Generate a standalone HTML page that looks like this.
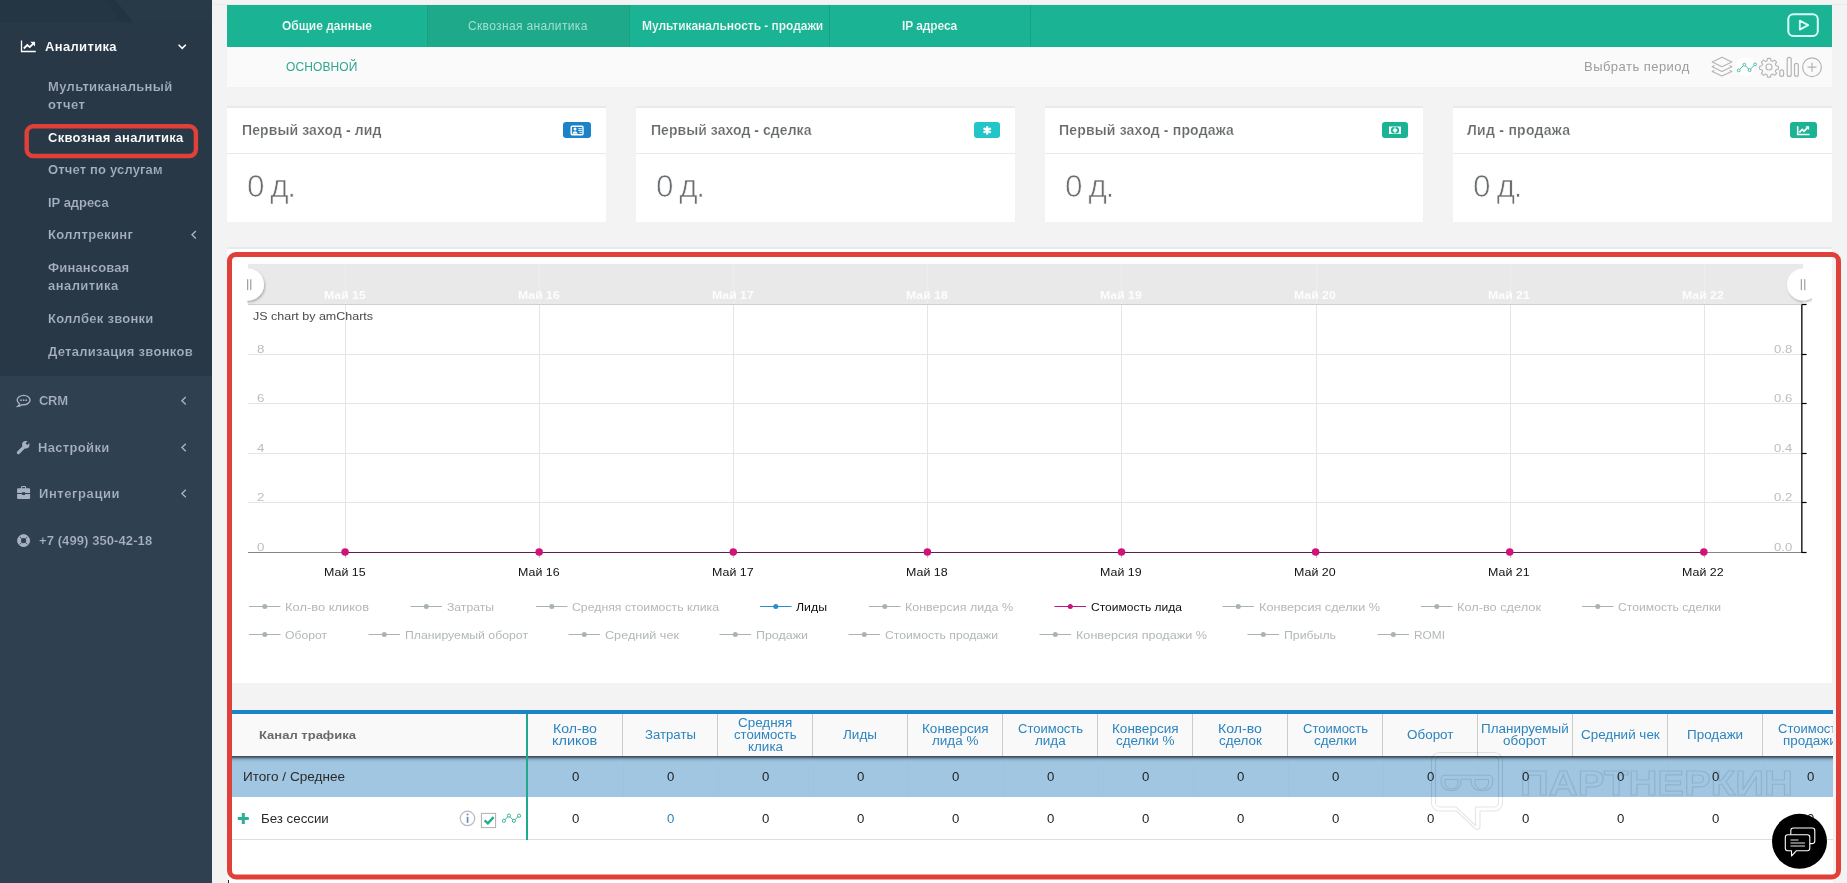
<!DOCTYPE html>
<html lang="ru">
<head>
<meta charset="utf-8">
<title>Сквозная аналитика</title>
<style>
*{box-sizing:border-box;margin:0;padding:0}
html,body{width:1847px;height:883px;overflow:hidden}
body{position:relative;background:#f3f3f4;font-family:"Liberation Sans",sans-serif;font-size:13px;color:#676a6c}
.t{position:absolute;white-space:nowrap;display:block;will-change:transform}
.abs{position:absolute}
svg{position:absolute;overflow:visible}
#side{position:absolute;left:0;top:0;width:212px;height:883px;background:#2f4050}
#side .act{position:absolute;left:0;top:0;width:212px;height:376px;background:#293846}
#side .hdr{position:absolute;left:0;top:0;width:212px;height:22px;background:linear-gradient(115deg,#263441 0,#263441 52%,#293745 52.5%,#2a3947 100%)}
#tabs{position:absolute;left:227px;top:5px;width:1605px;height:41.5px;background:#1ab394}
#tabs .sep{position:absolute;top:0;width:1px;height:41.5px;background:#18a085}
#tabs .on{position:absolute;left:200px;top:0;width:202px;height:41.5px;background:#1fa98b}
#sub{position:absolute;left:227px;top:46.5px;width:1605px;height:40.5px;background:#fafafa}
.card{position:absolute;top:105.5px;height:116.5px;background:#fff;border-top:2px solid #e7eaec}
.card .hr{position:absolute;left:0;right:0;top:45px;height:1px;background:#e7eaec}
.badge{position:absolute;top:122px;height:16px;border-radius:3px}
#panel{position:absolute;left:227px;top:246.5px;width:1605px;height:436.5px;background:#fff;border-top:2px solid #e7eaec}
#tbl{position:absolute;left:228px;top:710px;width:1605px;height:173px;background:#fff;overflow:hidden}
</style>
</head>
<body>
<nav id="side"><div class="act"></div>
<span class="t" style="left:45.3px;top:37.9px;font-size:13px;line-height:17px;font-weight:700;color:#ffffff;letter-spacing:0.343px;-webkit-text-stroke:.08px #293846;">Аналитика</span>
<span class="t" style="left:47.9px;top:77.9px;font-size:13px;line-height:17px;font-weight:700;color:#a7b1c2;letter-spacing:0.349px;-webkit-text-stroke:.17px #293846;">Мультиканальный</span>
<span class="t" style="left:47.9px;top:95.7px;font-size:13px;line-height:17px;font-weight:700;color:#a7b1c2;letter-spacing:0.448px;-webkit-text-stroke:.17px #293846;">отчет</span>
<span class="t" style="left:47.8px;top:129.1px;font-size:13px;line-height:17px;font-weight:700;color:#ffffff;letter-spacing:0.262px;-webkit-text-stroke:.08px #293846;">Сквозная аналитика</span>
<span class="t" style="left:47.8px;top:161.3px;font-size:13px;line-height:17px;font-weight:700;color:#a7b1c2;letter-spacing:0.163px;-webkit-text-stroke:.17px #293846;">Отчет по услугам</span>
<span class="t" style="left:47.8px;top:193.9px;font-size:13px;line-height:17px;font-weight:700;color:#a7b1c2;letter-spacing:-0.007px;-webkit-text-stroke:.17px #293846;">IP адреса</span>
<span class="t" style="left:47.8px;top:225.8px;font-size:13px;line-height:17px;font-weight:700;color:#a7b1c2;letter-spacing:0.348px;-webkit-text-stroke:.17px #293846;">Коллтрекинг</span>
<span class="t" style="left:47.8px;top:258.8px;font-size:13px;line-height:17px;font-weight:700;color:#a7b1c2;letter-spacing:0.147px;-webkit-text-stroke:.17px #293846;">Финансовая</span>
<span class="t" style="left:47.8px;top:277.1px;font-size:13px;line-height:17px;font-weight:700;color:#a7b1c2;letter-spacing:0.449px;-webkit-text-stroke:.17px #293846;">аналитика</span>
<span class="t" style="left:47.8px;top:309.7px;font-size:13px;line-height:17px;font-weight:700;color:#a7b1c2;letter-spacing:0.268px;-webkit-text-stroke:.17px #293846;">Коллбек звонки</span>
<span class="t" style="left:47.8px;top:342.5px;font-size:13px;line-height:17px;font-weight:700;color:#a7b1c2;letter-spacing:0.296px;-webkit-text-stroke:.17px #293846;">Детализация звонков</span>
<span class="t" style="left:39.1px;top:392.0px;font-size:13px;line-height:17px;font-weight:700;color:#a7b1c2;letter-spacing:-0.269px;-webkit-text-stroke:.17px #2f4050;">CRM</span>
<span class="t" style="left:38.3px;top:438.8px;font-size:13px;line-height:17px;font-weight:700;color:#a7b1c2;letter-spacing:0.335px;-webkit-text-stroke:.17px #2f4050;">Настройки</span>
<span class="t" style="left:39.1px;top:484.8px;font-size:13px;line-height:17px;font-weight:700;color:#a7b1c2;letter-spacing:0.574px;-webkit-text-stroke:.17px #2f4050;">Интеграции</span>
<span class="t" style="left:39.1px;top:532.0px;font-size:13px;line-height:17px;font-weight:700;color:#a7b1c2;letter-spacing:0.085px;-webkit-text-stroke:.17px #2f4050;">+7 (499) 350-42-18</span>
<svg width="212" height="883" viewBox="0 0 212 883" style="left:0;top:0">
<rect x="0" y="0" width="212" height="22.500" fill="#243644"/><path d="M115 0h97v22.500h-79z" fill="#283a48"/><path d="M105 0h10l18 22.500h-11z" fill="#223342"/>
<!-- line chart icon -->
<g fill="none" stroke="#fff" stroke-width="1.6"><path d="M21.5 40.6V51.5H35.8" stroke-width="1.3"/><path d="M23.8 48.5l3.5-3.5 2.5 2.1 4.2-4.2" stroke-width="1.8"/><path d="M31.6 42.3h2.9v2.9z" stroke-width="1.1" fill="#fff"/></g>
<!-- chevron down -->
<path d="M178.6 44.8l3.6 3.6 3.6-3.6" fill="none" stroke="#fff" stroke-width="1.6"/>
<!-- chevrons left -->
<g fill="none" stroke="#a7b1c2" stroke-width="1.4">
<path d="M195.9 231l-3.9 3.8 3.9 3.8"/>
<path d="M185.8 397l-3.9 3.8 3.9 3.8"/>
<path d="M185.8 443.7l-3.9 3.8 3.9 3.8"/>
<path d="M185.8 489.7l-3.9 3.8 3.9 3.8"/>
</g>
<!-- CRM comment icon -->
<g><path d="M23.6 395.4c-3.6 0-6.4 2.1-6.4 4.7 0 1.5 0.9 2.8 2.4 3.7-.2 0.9-.8 1.8-1.7 2.5 1.6-.1 3-.7 4-1.6.5.1 1.1.1 1.7.1 3.6 0 6.4-2.1 6.4-4.7s-2.800-4.700-6.400-4.700z" fill="none" stroke="#a7b1c2" stroke-width="1.4"/>
<circle cx="21" cy="400.200" r=".9" fill="#a7b1c2"/><circle cx="23.600" cy="400.200" r=".9" fill="#a7b1c2"/><circle cx="26.200" cy="400.200" r=".9" fill="#a7b1c2"/></g>
<!-- wrench -->
<g><path d="M18.400 452.600l6.300-6.300" stroke="#a7b1c2" stroke-width="3.200" stroke-linecap="round" fill="none"/><circle cx="25.800" cy="444.800" r="3.700" fill="#a7b1c2"/><path d="M26.400 444.200l3.600-3.600" stroke="#2f4050" stroke-width="2.600" fill="none"/></g>
<!-- briefcase -->
<g fill="#a7b1c2"><path d="M21.100 488.300v-1.400c0-.5.400-.9.900-.9h3.200c.5 0 .9.400.9.900v1.400h2.900c.6 0 1.100.5 1.100 1.100v3.600h-5v-.8h-3v.8h-5v-3.600c0-.6.500-1.100 1.100-1.100zm1.100 0h2.800v-1.200h-2.800zM17.100 494.100h5v.9h3v-.9h5v3.800c0 .6-.5 1.100-1.100 1.100h-10.800c-.6 0-1.100-.5-1.100-1.100z"/></g>
<!-- life ring -->
<g fill="none"><circle cx="23.600" cy="540.600" r="4.400" stroke="#a7b1c2" stroke-width="3.600"/><path d="M21.700 538.700l-2.200-2.200M25.500 538.700l2.200-2.200M21.700 542.500l-2.200 2.200M25.500 542.500l2.200 2.200" stroke="#2f4050" stroke-width=".9"/><circle cx="23.600" cy="540.600" r="5.900" stroke="#a7b1c2" stroke-width="1"/></g>
<!-- red annotation -->
<rect x="26.700" y="126.300" width="169.200" height="29.700" rx="6.500" fill="none" stroke="#e0403a" stroke-width="4.400"/>
</svg>
</nav>
<div class="abs" style="left:213px;top:4px;width:1634px;height:1px;background:#eaeaeb"></div>
<header id="tabs"><div class="on"></div><div class="sep" style="left:200px"></div><div class="sep" style="left:402px"></div><div class="sep" style="left:602px"></div><div class="sep" style="left:803px"></div></header>
<span class="t" style="left:282.2px;top:18.0px;font-size:12px;line-height:16px;font-weight:700;color:#fff;letter-spacing:-0.006px;-webkit-text-stroke:.2px #1ab394;">Общие данные</span>
<span class="t" style="left:468.2px;top:18.0px;font-size:12px;line-height:16px;font-weight:400;color:#a3dfd1;letter-spacing:0.350px;">Сквозная аналитика</span>
<span class="t" style="left:641.7px;top:18.0px;font-size:12px;line-height:16px;font-weight:700;color:#fff;letter-spacing:-0.039px;-webkit-text-stroke:.2px #1ab394;">Мультиканальность - продажи</span>
<span class="t" style="left:902.3px;top:18.0px;font-size:12px;line-height:16px;font-weight:700;color:#fff;letter-spacing:-0.099px;-webkit-text-stroke:.2px #1ab394;">IP адреса</span>
<svg width="40" height="30" viewBox="0 0 40 30" style="left:1783px;top:10px">
<rect x="5.300" y="4.300" width="29.500" height="21.600" rx="5" fill="none" stroke="#d6fff8" stroke-width="2"/>
<path d="M16.800 10.600v9l8.400-4.500z" fill="none" stroke="#d6fff8" stroke-width="1.800" stroke-linejoin="round"/>
</svg>
<div id="sub"></div>
<span class="t" style="left:286.3px;top:59.3px;font-size:12px;line-height:16px;font-weight:400;color:#2fa790;letter-spacing:0.109px;">ОСНОВНОЙ</span>
<span class="t" style="left:1584.2px;top:57.7px;font-size:13px;line-height:17px;font-weight:400;color:#9b9c9d;letter-spacing:0.467px;">Выбрать период</span>
<svg width="130" height="30" viewBox="1705 52 130 30" style="left:1705px;top:52px">
<g fill="none" stroke="#b4b4b4" stroke-width="1.150" stroke-linejoin="round">
<path d="M1722 57.300l9.800 4.700-9.800 4.700-9.800-4.700z"/><path d="M1714.400 65.600l-2.200 1.100 9.800 4.700 9.800-4.700-2.200-1.100"/><path d="M1714.400 70.300l-2.200 1.100 9.800 4.700 9.800-4.700-2.200-1.100"/>
</g>
<circle cx="1745.500" cy="66.500" r="9.800" fill="#fff"/>
<g fill="none" stroke="#3fb89e" stroke-width=".95"><path d="M1739.700 69.400l3.600-3.600M1745.500 65.800l3.100 3.200M1750.600 69l3.500-3.500"/><circle cx="1738.700" cy="70.400" r="1.400"/><circle cx="1744.400" cy="64.700" r="1.400"/><circle cx="1749.600" cy="70.100" r="1.400"/><circle cx="1755.100" cy="64.400" r="1.400"/></g>
<g fill="none" stroke="#b4b4b4" stroke-width="1.200">
<g transform="translate(1769 67) scale(.92) translate(-1769 -67)"><circle cx="1769" cy="67" r="3.300"/>
<path d="M1767.400 57.600h3.200l.5 2.500 1.800.8 2.100-1.400 2.300 2.300-1.400 2.100.8 1.800 2.500.5v3.200l-2.500.5-.8 1.800 1.400 2.100-2.300 2.300-2.100-1.400-1.800.8-.5 2.500h-3.200l-.5-2.500-1.800-.8-2.100 1.400-2.300-2.300 1.400-2.100-.8-1.800-2.500-.5v-3.200l2.500-.5.8-1.800-1.400-2.100 2.300-2.300 2.100 1.400 1.800-.8z" stroke-linejoin="round"/></g>
<rect x="1779.800" y="69.800" width="3.800" height="6.600" rx="1.900"/><rect x="1787.200" y="57.400" width="4" height="19" rx="2"/><rect x="1794.500" y="63.400" width="3.800" height="13" rx="1.900"/>
<circle cx="1812" cy="67.200" r="9.400"/><path d="M1807.500 67.200h9M1812 62.700v9"/>
</g></svg>
<section class="card" style="left:227px;width:379px"><div class="hr"></div></section>
<span class="t" style="left:241.7px;top:121.0px;font-size:14px;line-height:18px;font-weight:700;color:#676a6c;letter-spacing:0.109px;-webkit-text-stroke:.2px #fff;">Первый заход - лид</span>
<span class="t" style="left:247.0px;top:165.8px;font-size:31.5px;line-height:41px;font-weight:400;color:#6b6e70;letter-spacing:-1.451px;-webkit-text-stroke:0.7px #fff;">0 д.</span>
<section class="card" style="left:636px;width:379px"><div class="hr"></div></section>
<span class="t" style="left:650.5px;top:121.0px;font-size:14px;line-height:18px;font-weight:700;color:#676a6c;letter-spacing:0.057px;-webkit-text-stroke:.2px #fff;">Первый заход - сделка</span>
<span class="t" style="left:655.9px;top:165.8px;font-size:31.5px;line-height:41px;font-weight:400;color:#6b6e70;letter-spacing:-1.451px;-webkit-text-stroke:0.7px #fff;">0 д.</span>
<section class="card" style="left:1045px;width:378px"><div class="hr"></div></section>
<span class="t" style="left:1059.1px;top:121.0px;font-size:14px;line-height:18px;font-weight:700;color:#676a6c;letter-spacing:0.173px;-webkit-text-stroke:.2px #fff;">Первый заход - продажа</span>
<span class="t" style="left:1064.9px;top:165.8px;font-size:31.5px;line-height:41px;font-weight:400;color:#6b6e70;letter-spacing:-1.376px;-webkit-text-stroke:0.7px #fff;">0 д.</span>
<section class="card" style="left:1453px;width:379px"><div class="hr"></div></section>
<span class="t" style="left:1467.4px;top:121.0px;font-size:14px;line-height:18px;font-weight:700;color:#676a6c;letter-spacing:0.270px;-webkit-text-stroke:.2px #fff;">Лид - продажа</span>
<span class="t" style="left:1473.2px;top:165.8px;font-size:31.5px;line-height:41px;font-weight:400;color:#6b6e70;letter-spacing:-1.276px;-webkit-text-stroke:0.7px #fff;">0 д.</span>
<div class="badge" style="left:563px;width:28px;background:#1c84c6"></div>
<div class="badge" style="left:974px;width:26px;background:#23c6c8"></div>
<div class="badge" style="left:1382px;width:26px;background:#1ab394"></div>
<div class="badge" style="left:1790px;width:27px;background:#1ab394"></div>
<svg width="1300" height="20" viewBox="560 120 1300 20" style="left:560px;top:120px">
<!-- id card -->
<rect x="571.200" y="126.200" width="11.800" height="8.600" rx="1" fill="none" stroke="#fff" stroke-width="1.400"/>
<circle cx="575" cy="129" r="1.500" fill="#fff"/><path d="M572.500 133.800c0-3.500 5-3.500 5 0z" fill="#fff"/>
<path d="M578.400 128.700h3.400M578.400 130.600h3.400M579.600 132.600h2.200" stroke="#fff" stroke-width="1"/>
<!-- asterisk -->
<g stroke="#fff" stroke-width="2.400" stroke-linecap="round"><path d="M987.200 127.200v6.400M984.400 128.800l5.600 3.200M984.400 132l5.600-3.200"/></g>
<!-- money -->
<rect x="1389" y="126.500" width="12" height="7.500" fill="#fff"/><ellipse cx="1395" cy="130.250" rx="3.300" ry="2.600" fill="#d8fbf4" stroke="#1ab394" stroke-width="1.800"/><rect x="1394.400" y="126.500" width="1.200" height="7.500" fill="#fff" fill-opacity=".85"/>
<!-- line chart -->
<g fill="none" stroke="#fff"><path d="M1797.700 126.200v8.300h11.800" stroke-width="1.600"/><path d="M1799.400 132.400l2.800-2.900 1.800 1.700 3.900-3.800" stroke-width="1.700"/><path d="M1805.800 126.900h2.700v2.700" stroke-width="1.300"/></g>
</svg>
<section id="panel"></section>
<svg width="1847" height="883" viewBox="0 0 1847 883" style="left:0;top:0">
<defs><clipPath id="cc"><rect x="247" y="255" width="1565" height="60"/></clipPath><filter id="sh" x="-30%" y="-30%" width="170%" height="170%"><feDropShadow dx="1" dy="1.5" stdDeviation="1.2" flood-color="#000" flood-opacity=".28"/></filter></defs>
<rect x="248" y="264" width="1555" height="40" fill="#e9e9e9"/>
<rect x="248" y="304" width="1555" height="1" fill="#cfcfcf"/>
<rect x="345" y="264" width="1" height="40" fill="#eeeeee"/>
<rect x="539" y="264" width="1" height="40" fill="#eeeeee"/>
<rect x="733" y="264" width="1" height="40" fill="#eeeeee"/>
<rect x="927" y="264" width="1" height="40" fill="#eeeeee"/>
<rect x="1121" y="264" width="1" height="40" fill="#eeeeee"/>
<rect x="1316" y="264" width="1" height="40" fill="#eeeeee"/>
<rect x="1510" y="264" width="1" height="40" fill="#eeeeee"/>
<rect x="1704" y="264" width="1" height="40" fill="#eeeeee"/>
<rect x="345" y="305" width="1" height="247" fill="#e5e5e5"/>
<rect x="539" y="305" width="1" height="247" fill="#e5e5e5"/>
<rect x="733" y="305" width="1" height="247" fill="#e5e5e5"/>
<rect x="927" y="305" width="1" height="247" fill="#e5e5e5"/>
<rect x="1121" y="305" width="1" height="247" fill="#e5e5e5"/>
<rect x="1316" y="305" width="1" height="247" fill="#e5e5e5"/>
<rect x="1510" y="305" width="1" height="247" fill="#e5e5e5"/>
<rect x="1704" y="305" width="1" height="247" fill="#e5e5e5"/>
<rect x="248" y="502.0" width="1554" height="1" fill="#e5e5e5"/>
<rect x="248" y="453.0" width="1554" height="1" fill="#e5e5e5"/>
<rect x="248" y="403.0" width="1554" height="1" fill="#e5e5e5"/>
<rect x="248" y="354.0" width="1554" height="1" fill="#e5e5e5"/>
<rect x="248" y="552" width="1554" height="1" fill="#858585"/>
<rect x="345" y="553" width="1" height="5" fill="#c4c4c4"/>
<rect x="539" y="553" width="1" height="5" fill="#c4c4c4"/>
<rect x="733" y="553" width="1" height="5" fill="#c4c4c4"/>
<rect x="927" y="553" width="1" height="5" fill="#c4c4c4"/>
<rect x="1121" y="553" width="1" height="5" fill="#c4c4c4"/>
<rect x="1316" y="553" width="1" height="5" fill="#c4c4c4"/>
<rect x="1510" y="553" width="1" height="5" fill="#c4c4c4"/>
<rect x="1704" y="553" width="1" height="5" fill="#c4c4c4"/>
<rect x="345.1" y="552" width="1358.8" height="1" fill="#5c1f4f"/>
<circle cx="345.06" cy="552.1" r="3.75" fill="#d0137a"/>
<circle cx="539.16" cy="552.1" r="3.75" fill="#d0137a"/>
<circle cx="733.28" cy="552.1" r="3.75" fill="#d0137a"/>
<circle cx="927.38" cy="552.1" r="3.75" fill="#d0137a"/>
<circle cx="1121.50" cy="552.1" r="3.75" fill="#d0137a"/>
<circle cx="1315.61" cy="552.1" r="3.75" fill="#d0137a"/>
<circle cx="1509.72" cy="552.1" r="3.75" fill="#d0137a"/>
<circle cx="1703.83" cy="552.1" r="3.75" fill="#d0137a"/>
<rect x="1801.2" y="304.5" width="1.3" height="248.5" fill="#000"/>
<rect x="1802" y="551.9" width="4.6" height="1.2" fill="#000"/>
<rect x="1802" y="501.9" width="4.6" height="1.2" fill="#000"/>
<rect x="1802" y="452.9" width="4.6" height="1.2" fill="#000"/>
<rect x="1802" y="402.9" width="4.6" height="1.2" fill="#000"/>
<rect x="1802" y="353.9" width="4.6" height="1.2" fill="#000"/>
<rect x="1802" y="303.9" width="4.6" height="1.2" fill="#000"/>
<g clip-path="url(#cc)"><circle cx="248" cy="284.5" r="16" fill="#fff" filter="url(#sh)"/><circle cx="1803" cy="284.5" r="16" fill="#fff" filter="url(#sh)"/>
<path d="M247.700 279.200v11M250.800 279.200v11M1801.300 279.200v11M1804.800 279.200v11" stroke="#8a8a8a" stroke-width="1"/></g>
<rect x="249" y="606" width="31.5" height="1" fill="#aab2b2"/><circle cx="264.8" cy="606.4" r="2.500" fill="#aab2b2"/>
<rect x="410.5" y="606" width="31.5" height="1" fill="#aab2b2"/><circle cx="426.3" cy="606.4" r="2.500" fill="#aab2b2"/>
<rect x="536" y="606" width="31.5" height="1" fill="#aab2b2"/><circle cx="551.8" cy="606.4" r="2.500" fill="#aab2b2"/>
<rect x="760" y="606" width="31.5" height="1" fill="#2a8fc9"/><circle cx="775.8" cy="606.4" r="2.500" fill="#2a8fc9"/>
<rect x="869" y="606" width="31.5" height="1" fill="#aab2b2"/><circle cx="884.8" cy="606.4" r="2.500" fill="#aab2b2"/>
<rect x="1054.5" y="606" width="31.5" height="1" fill="#c21580"/><circle cx="1070.3" cy="606.4" r="2.500" fill="#c21580"/>
<rect x="1222.5" y="606" width="31.5" height="1" fill="#aab2b2"/><circle cx="1238.3" cy="606.4" r="2.500" fill="#aab2b2"/>
<rect x="1421" y="606" width="31.5" height="1" fill="#aab2b2"/><circle cx="1436.8" cy="606.4" r="2.500" fill="#aab2b2"/>
<rect x="1582" y="606" width="31.5" height="1" fill="#aab2b2"/><circle cx="1597.8" cy="606.4" r="2.500" fill="#aab2b2"/>
<rect x="249" y="634" width="31.5" height="1" fill="#aab2b2"/><circle cx="264.8" cy="634.5" r="2.500" fill="#aab2b2"/>
<rect x="368.5" y="634" width="31.5" height="1" fill="#aab2b2"/><circle cx="384.3" cy="634.5" r="2.500" fill="#aab2b2"/>
<rect x="568.5" y="634" width="31.5" height="1" fill="#aab2b2"/><circle cx="584.3" cy="634.5" r="2.500" fill="#aab2b2"/>
<rect x="719.5" y="634" width="31.5" height="1" fill="#aab2b2"/><circle cx="735.3" cy="634.5" r="2.500" fill="#aab2b2"/>
<rect x="848.5" y="634" width="31.5" height="1" fill="#aab2b2"/><circle cx="864.3" cy="634.5" r="2.500" fill="#aab2b2"/>
<rect x="1039.5" y="634" width="31.5" height="1" fill="#aab2b2"/><circle cx="1055.3" cy="634.5" r="2.500" fill="#aab2b2"/>
<rect x="1247.5" y="634" width="31.5" height="1" fill="#aab2b2"/><circle cx="1263.3" cy="634.5" r="2.500" fill="#aab2b2"/>
<rect x="1377.5" y="634" width="31.5" height="1" fill="#aab2b2"/><circle cx="1393.3" cy="634.5" r="2.500" fill="#aab2b2"/>
</svg>
<span class="t" style="left:323.6px;top:565.0px;font-size:11px;line-height:14px;font-weight:400;color:#111;transform:scaleX(1.1292);transform-origin:0 50%;">Май 15</span>
<span class="t" style="left:323.6px;top:288.3px;font-size:11px;line-height:14px;font-weight:700;color:#fdfdfd;transform:scaleX(1.1129);transform-origin:0 50%;">Май 15</span>
<span class="t" style="left:517.7px;top:565.0px;font-size:11px;line-height:14px;font-weight:400;color:#111;transform:scaleX(1.1292);transform-origin:0 50%;">Май 16</span>
<span class="t" style="left:517.7px;top:288.3px;font-size:11px;line-height:14px;font-weight:700;color:#fdfdfd;transform:scaleX(1.1129);transform-origin:0 50%;">Май 16</span>
<span class="t" style="left:711.8px;top:565.0px;font-size:11px;line-height:14px;font-weight:400;color:#111;transform:scaleX(1.1292);transform-origin:0 50%;">Май 17</span>
<span class="t" style="left:711.8px;top:288.3px;font-size:11px;line-height:14px;font-weight:700;color:#fdfdfd;transform:scaleX(1.1129);transform-origin:0 50%;">Май 17</span>
<span class="t" style="left:905.9px;top:565.0px;font-size:11px;line-height:14px;font-weight:400;color:#111;transform:scaleX(1.1292);transform-origin:0 50%;">Май 18</span>
<span class="t" style="left:905.9px;top:288.3px;font-size:11px;line-height:14px;font-weight:700;color:#fdfdfd;transform:scaleX(1.1129);transform-origin:0 50%;">Май 18</span>
<span class="t" style="left:1100.0px;top:565.0px;font-size:11px;line-height:14px;font-weight:400;color:#111;transform:scaleX(1.1292);transform-origin:0 50%;">Май 19</span>
<span class="t" style="left:1100.0px;top:288.3px;font-size:11px;line-height:14px;font-weight:700;color:#fdfdfd;transform:scaleX(1.1129);transform-origin:0 50%;">Май 19</span>
<span class="t" style="left:1294.1px;top:565.0px;font-size:11px;line-height:14px;font-weight:400;color:#111;transform:scaleX(1.1292);transform-origin:0 50%;">Май 20</span>
<span class="t" style="left:1294.1px;top:288.3px;font-size:11px;line-height:14px;font-weight:700;color:#fdfdfd;transform:scaleX(1.1129);transform-origin:0 50%;">Май 20</span>
<span class="t" style="left:1488.2px;top:565.0px;font-size:11px;line-height:14px;font-weight:400;color:#111;transform:scaleX(1.1292);transform-origin:0 50%;">Май 21</span>
<span class="t" style="left:1488.2px;top:288.3px;font-size:11px;line-height:14px;font-weight:700;color:#fdfdfd;transform:scaleX(1.1129);transform-origin:0 50%;">Май 21</span>
<span class="t" style="left:1682.3px;top:565.0px;font-size:11px;line-height:14px;font-weight:400;color:#111;transform:scaleX(1.1292);transform-origin:0 50%;">Май 22</span>
<span class="t" style="left:1682.3px;top:288.3px;font-size:11px;line-height:14px;font-weight:700;color:#fdfdfd;transform:scaleX(1.1129);transform-origin:0 50%;">Май 22</span>
<span class="t" style="left:252.5px;top:309.0px;font-size:11px;line-height:14px;font-weight:400;color:#4a4a4a;transform:scaleX(1.1347);transform-origin:0 50%;">JS chart by amCharts</span>
<span class="t" style="left:256.7px;top:540.0px;font-size:11px;line-height:14px;font-weight:400;color:#bdbdbd;transform:scaleX(1.2096);transform-origin:0 50%;">0</span>
<span class="t" style="left:256.7px;top:490.0px;font-size:11px;line-height:14px;font-weight:400;color:#bdbdbd;transform:scaleX(1.2096);transform-origin:0 50%;">2</span>
<span class="t" style="left:256.7px;top:441.0px;font-size:11px;line-height:14px;font-weight:400;color:#bdbdbd;transform:scaleX(1.2096);transform-origin:0 50%;">4</span>
<span class="t" style="left:256.7px;top:391.0px;font-size:11px;line-height:14px;font-weight:400;color:#bdbdbd;transform:scaleX(1.2096);transform-origin:0 50%;">6</span>
<span class="t" style="left:256.7px;top:342.0px;font-size:11px;line-height:14px;font-weight:400;color:#bdbdbd;transform:scaleX(1.2096);transform-origin:0 50%;">8</span>
<span class="t" style="left:1774.0px;top:540.0px;font-size:11px;line-height:14px;font-weight:400;color:#bdbdbd;transform:scaleX(1.1902);transform-origin:0 50%;">0.0</span>
<span class="t" style="left:1774.0px;top:490.0px;font-size:11px;line-height:14px;font-weight:400;color:#bdbdbd;transform:scaleX(1.1902);transform-origin:0 50%;">0.2</span>
<span class="t" style="left:1774.0px;top:441.0px;font-size:11px;line-height:14px;font-weight:400;color:#bdbdbd;transform:scaleX(1.1902);transform-origin:0 50%;">0.4</span>
<span class="t" style="left:1774.0px;top:391.0px;font-size:11px;line-height:14px;font-weight:400;color:#bdbdbd;transform:scaleX(1.1902);transform-origin:0 50%;">0.6</span>
<span class="t" style="left:1774.0px;top:342.0px;font-size:11px;line-height:14px;font-weight:400;color:#bdbdbd;transform:scaleX(1.1902);transform-origin:0 50%;">0.8</span>
<span class="t" style="left:284.5px;top:599.5px;font-size:11px;line-height:14px;font-weight:400;color:#b2b8b8;transform:scaleX(1.1722);transform-origin:0 50%;">Кол-во кликов</span>
<span class="t" style="left:446.5px;top:599.5px;font-size:11px;line-height:14px;font-weight:400;color:#b2b8b8;transform:scaleX(1.1060);transform-origin:0 50%;">Затраты</span>
<span class="t" style="left:571.5px;top:599.5px;font-size:11px;line-height:14px;font-weight:400;color:#b2b8b8;transform:scaleX(1.1157);transform-origin:0 50%;">Средняя стоимость клика</span>
<span class="t" style="left:795.5px;top:599.5px;font-size:11px;line-height:14px;font-weight:400;color:#111;transform:scaleX(1.1196);transform-origin:0 50%;">Лиды</span>
<span class="t" style="left:904.5px;top:599.5px;font-size:11px;line-height:14px;font-weight:400;color:#b2b8b8;transform:scaleX(1.1350);transform-origin:0 50%;">Конверсия лида %</span>
<span class="t" style="left:1090.5px;top:599.5px;font-size:11px;line-height:14px;font-weight:400;color:#111;transform:scaleX(1.0934);transform-origin:0 50%;">Стоимость лида</span>
<span class="t" style="left:1258.5px;top:599.5px;font-size:11px;line-height:14px;font-weight:400;color:#b2b8b8;transform:scaleX(1.1513);transform-origin:0 50%;">Конверсия сделки %</span>
<span class="t" style="left:1456.5px;top:599.5px;font-size:11px;line-height:14px;font-weight:400;color:#b2b8b8;transform:scaleX(1.1601);transform-origin:0 50%;">Кол-во сделок</span>
<span class="t" style="left:1617.5px;top:599.5px;font-size:11px;line-height:14px;font-weight:400;color:#b2b8b8;transform:scaleX(1.1055);transform-origin:0 50%;">Стоимость сделки</span>
<span class="t" style="left:284.5px;top:627.8px;font-size:11px;line-height:14px;font-weight:400;color:#b2b8b8;transform:scaleX(1.1051);transform-origin:0 50%;">Оборот</span>
<span class="t" style="left:404.5px;top:627.8px;font-size:11px;line-height:14px;font-weight:400;color:#b2b8b8;transform:scaleX(1.1142);transform-origin:0 50%;">Планируемый оборот</span>
<span class="t" style="left:604.5px;top:627.8px;font-size:11px;line-height:14px;font-weight:400;color:#b2b8b8;transform:scaleX(1.1484);transform-origin:0 50%;">Средний чек</span>
<span class="t" style="left:755.5px;top:627.8px;font-size:11px;line-height:14px;font-weight:400;color:#b2b8b8;transform:scaleX(1.1319);transform-origin:0 50%;">Продажи</span>
<span class="t" style="left:884.5px;top:627.8px;font-size:11px;line-height:14px;font-weight:400;color:#b2b8b8;transform:scaleX(1.1066);transform-origin:0 50%;">Стоимость продажи</span>
<span class="t" style="left:1075.5px;top:627.8px;font-size:11px;line-height:14px;font-weight:400;color:#b2b8b8;transform:scaleX(1.1487);transform-origin:0 50%;">Конверсия продажи %</span>
<span class="t" style="left:1283.5px;top:627.8px;font-size:11px;line-height:14px;font-weight:400;color:#b2b8b8;transform:scaleX(1.1177);transform-origin:0 50%;">Прибыль</span>
<span class="t" style="left:1413.5px;top:627.8px;font-size:11px;line-height:14px;font-weight:400;color:#b2b8b8;transform:scaleX(1.0794);transform-origin:0 50%;">ROMI</span>
<section id="tbl">
<div class="abs" style="left:0;top:0;width:1605px;height:4px;background:#1c84c6"></div>
<div class="abs" style="left:0;top:4px;width:1605px;height:42px;background:#f9f9f9"></div>
<div class="abs" style="left:0;top:46px;width:1605px;height:41px;background:#a0c6e2"></div>
<div class="abs" style="left:0;top:46px;width:1605px;height:7px;background:linear-gradient(#3f5160 0,#3f5160 10%,#5a7183 24%,#7796ac 38%,#8eb0c8 52%,#98bcd6 66%,#9cc2dd 80%,#a0c6e2 100%)"></div>
<div class="abs" style="left:0;top:129px;width:1605px;height:1px;background:#dddddd"></div>
<div class="abs" style="left:394px;top:4px;width:1px;height:42px;background:#cbcbcb"></div>
<div class="abs" style="left:395px;top:53px;width:1px;height:34px;background:#9cc3df"></div>
<div class="abs" style="left:489px;top:4px;width:1px;height:42px;background:#cbcbcb"></div>
<div class="abs" style="left:490px;top:53px;width:1px;height:34px;background:#9cc3df"></div>
<div class="abs" style="left:584px;top:4px;width:1px;height:42px;background:#cbcbcb"></div>
<div class="abs" style="left:585px;top:53px;width:1px;height:34px;background:#9cc3df"></div>
<div class="abs" style="left:679px;top:4px;width:1px;height:42px;background:#cbcbcb"></div>
<div class="abs" style="left:680px;top:53px;width:1px;height:34px;background:#9cc3df"></div>
<div class="abs" style="left:774px;top:4px;width:1px;height:42px;background:#cbcbcb"></div>
<div class="abs" style="left:775px;top:53px;width:1px;height:34px;background:#9cc3df"></div>
<div class="abs" style="left:869px;top:4px;width:1px;height:42px;background:#cbcbcb"></div>
<div class="abs" style="left:870px;top:53px;width:1px;height:34px;background:#9cc3df"></div>
<div class="abs" style="left:964px;top:4px;width:1px;height:42px;background:#cbcbcb"></div>
<div class="abs" style="left:965px;top:53px;width:1px;height:34px;background:#9cc3df"></div>
<div class="abs" style="left:1059px;top:4px;width:1px;height:42px;background:#cbcbcb"></div>
<div class="abs" style="left:1060px;top:53px;width:1px;height:34px;background:#9cc3df"></div>
<div class="abs" style="left:1154px;top:4px;width:1px;height:42px;background:#cbcbcb"></div>
<div class="abs" style="left:1155px;top:53px;width:1px;height:34px;background:#9cc3df"></div>
<div class="abs" style="left:1249px;top:4px;width:1px;height:42px;background:#cbcbcb"></div>
<div class="abs" style="left:1250px;top:53px;width:1px;height:34px;background:#9cc3df"></div>
<div class="abs" style="left:1344px;top:4px;width:1px;height:42px;background:#cbcbcb"></div>
<div class="abs" style="left:1345px;top:53px;width:1px;height:34px;background:#9cc3df"></div>
<div class="abs" style="left:1439px;top:4px;width:1px;height:42px;background:#cbcbcb"></div>
<div class="abs" style="left:1440px;top:53px;width:1px;height:34px;background:#9cc3df"></div>
<div class="abs" style="left:1534px;top:4px;width:1px;height:42px;background:#cbcbcb"></div>
<div class="abs" style="left:1535px;top:53px;width:1px;height:34px;background:#9cc3df"></div>
<div class="abs" style="left:1629px;top:4px;width:1px;height:42px;background:#cbcbcb"></div>
<div class="abs" style="left:1630px;top:53px;width:1px;height:34px;background:#9cc3df"></div>
<div class="abs" style="left:298px;top:4px;width:2px;height:126px;background:#22a88c"></div>
</section>
<span class="t" style="left:553.0px;top:721.0px;font-size:12px;line-height:16px;font-weight:400;color:#2b84bf;transform:scaleX(1.1765);transform-origin:0 50%;">Кол-во</span>
<span class="t" style="left:552.4px;top:733.0px;font-size:12px;line-height:16px;font-weight:400;color:#2b84bf;transform:scaleX(1.2046);transform-origin:0 50%;">кликов</span>
<span class="t" style="left:572.0px;top:768.6px;font-size:12px;line-height:16px;font-weight:400;color:#1e1e1e;transform:scaleX(1.1000);transform-origin:0 50%;">0</span>
<span class="t" style="left:572.0px;top:810.6px;font-size:12px;line-height:16px;font-weight:400;color:#1e1e1e;transform:scaleX(1.1000);transform-origin:0 50%;">0</span>
<span class="t" style="left:644.5px;top:727.0px;font-size:12px;line-height:16px;font-weight:400;color:#2b84bf;transform:scaleX(1.0979);transform-origin:0 50%;">Затраты</span>
<span class="t" style="left:667.0px;top:768.6px;font-size:12px;line-height:16px;font-weight:400;color:#1e1e1e;transform:scaleX(1.1000);transform-origin:0 50%;">0</span>
<span class="t" style="left:667.0px;top:810.6px;font-size:12px;line-height:16px;font-weight:400;color:#2b84bf;transform:scaleX(1.1000);transform-origin:0 50%;">0</span>
<span class="t" style="left:737.9px;top:715.0px;font-size:12px;line-height:16px;font-weight:400;color:#2b84bf;transform:scaleX(1.1200);transform-origin:0 50%;">Средняя</span>
<span class="t" style="left:733.7px;top:727.0px;font-size:12px;line-height:16px;font-weight:400;color:#2b84bf;transform:scaleX(1.0904);transform-origin:0 50%;">стоимость</span>
<span class="t" style="left:747.5px;top:739.0px;font-size:12px;line-height:16px;font-weight:400;color:#2b84bf;transform:scaleX(1.1200);transform-origin:0 50%;">клика</span>
<span class="t" style="left:762.0px;top:768.6px;font-size:12px;line-height:16px;font-weight:400;color:#1e1e1e;transform:scaleX(1.1000);transform-origin:0 50%;">0</span>
<span class="t" style="left:762.0px;top:810.6px;font-size:12px;line-height:16px;font-weight:400;color:#1e1e1e;transform:scaleX(1.1000);transform-origin:0 50%;">0</span>
<span class="t" style="left:843.0px;top:727.0px;font-size:12px;line-height:16px;font-weight:400;color:#2b84bf;transform:scaleX(1.1256);transform-origin:0 50%;">Лиды</span>
<span class="t" style="left:857.0px;top:768.6px;font-size:12px;line-height:16px;font-weight:400;color:#1e1e1e;transform:scaleX(1.1000);transform-origin:0 50%;">0</span>
<span class="t" style="left:857.0px;top:810.6px;font-size:12px;line-height:16px;font-weight:400;color:#1e1e1e;transform:scaleX(1.1000);transform-origin:0 50%;">0</span>
<span class="t" style="left:921.8px;top:721.0px;font-size:12px;line-height:16px;font-weight:400;color:#2b84bf;transform:scaleX(1.1256);transform-origin:0 50%;">Конверсия</span>
<span class="t" style="left:931.8px;top:733.0px;font-size:12px;line-height:16px;font-weight:400;color:#2b84bf;transform:scaleX(1.1200);transform-origin:0 50%;">лида %</span>
<span class="t" style="left:952.0px;top:768.6px;font-size:12px;line-height:16px;font-weight:400;color:#1e1e1e;transform:scaleX(1.1000);transform-origin:0 50%;">0</span>
<span class="t" style="left:952.0px;top:810.6px;font-size:12px;line-height:16px;font-weight:400;color:#1e1e1e;transform:scaleX(1.1000);transform-origin:0 50%;">0</span>
<span class="t" style="left:1017.5px;top:721.0px;font-size:12px;line-height:16px;font-weight:400;color:#2b84bf;transform:scaleX(1.0836);transform-origin:0 50%;">Стоимость</span>
<span class="t" style="left:1034.7px;top:733.0px;font-size:12px;line-height:16px;font-weight:400;color:#2b84bf;transform:scaleX(1.1200);transform-origin:0 50%;">лида</span>
<span class="t" style="left:1047.0px;top:768.6px;font-size:12px;line-height:16px;font-weight:400;color:#1e1e1e;transform:scaleX(1.1000);transform-origin:0 50%;">0</span>
<span class="t" style="left:1047.0px;top:810.6px;font-size:12px;line-height:16px;font-weight:400;color:#1e1e1e;transform:scaleX(1.1000);transform-origin:0 50%;">0</span>
<span class="t" style="left:1111.8px;top:721.0px;font-size:12px;line-height:16px;font-weight:400;color:#2b84bf;transform:scaleX(1.1256);transform-origin:0 50%;">Конверсия</span>
<span class="t" style="left:1115.7px;top:733.0px;font-size:12px;line-height:16px;font-weight:400;color:#2b84bf;transform:scaleX(1.1200);transform-origin:0 50%;">сделки %</span>
<span class="t" style="left:1142.0px;top:768.6px;font-size:12px;line-height:16px;font-weight:400;color:#1e1e1e;transform:scaleX(1.1000);transform-origin:0 50%;">0</span>
<span class="t" style="left:1142.0px;top:810.6px;font-size:12px;line-height:16px;font-weight:400;color:#1e1e1e;transform:scaleX(1.1000);transform-origin:0 50%;">0</span>
<span class="t" style="left:1218.0px;top:721.0px;font-size:12px;line-height:16px;font-weight:400;color:#2b84bf;transform:scaleX(1.1765);transform-origin:0 50%;">Кол-во</span>
<span class="t" style="left:1218.5px;top:733.0px;font-size:12px;line-height:16px;font-weight:400;color:#2b84bf;transform:scaleX(1.1200);transform-origin:0 50%;">сделок</span>
<span class="t" style="left:1237.0px;top:768.6px;font-size:12px;line-height:16px;font-weight:400;color:#1e1e1e;transform:scaleX(1.1000);transform-origin:0 50%;">0</span>
<span class="t" style="left:1237.0px;top:810.6px;font-size:12px;line-height:16px;font-weight:400;color:#1e1e1e;transform:scaleX(1.1000);transform-origin:0 50%;">0</span>
<span class="t" style="left:1302.5px;top:721.0px;font-size:12px;line-height:16px;font-weight:400;color:#2b84bf;transform:scaleX(1.0836);transform-origin:0 50%;">Стоимость</span>
<span class="t" style="left:1313.6px;top:733.0px;font-size:12px;line-height:16px;font-weight:400;color:#2b84bf;transform:scaleX(1.1200);transform-origin:0 50%;">сделки</span>
<span class="t" style="left:1332.0px;top:768.6px;font-size:12px;line-height:16px;font-weight:400;color:#1e1e1e;transform:scaleX(1.1000);transform-origin:0 50%;">0</span>
<span class="t" style="left:1332.0px;top:810.6px;font-size:12px;line-height:16px;font-weight:400;color:#1e1e1e;transform:scaleX(1.1000);transform-origin:0 50%;">0</span>
<span class="t" style="left:1406.8px;top:727.0px;font-size:12px;line-height:16px;font-weight:400;color:#2b84bf;transform:scaleX(1.1200);transform-origin:0 50%;">Оборот</span>
<span class="t" style="left:1427.0px;top:768.6px;font-size:12px;line-height:16px;font-weight:400;color:#1e1e1e;transform:scaleX(1.1000);transform-origin:0 50%;">0</span>
<span class="t" style="left:1427.0px;top:810.6px;font-size:12px;line-height:16px;font-weight:400;color:#1e1e1e;transform:scaleX(1.1000);transform-origin:0 50%;">0</span>
<span class="t" style="left:1481.2px;top:721.0px;font-size:12px;line-height:16px;font-weight:400;color:#2b84bf;transform:scaleX(1.1200);transform-origin:0 50%;">Планируемый</span>
<span class="t" style="left:1503.3px;top:733.0px;font-size:12px;line-height:16px;font-weight:400;color:#2b84bf;transform:scaleX(1.1200);transform-origin:0 50%;">оборот</span>
<span class="t" style="left:1522.0px;top:768.6px;font-size:12px;line-height:16px;font-weight:400;color:#1e1e1e;transform:scaleX(1.1000);transform-origin:0 50%;">0</span>
<span class="t" style="left:1522.0px;top:810.6px;font-size:12px;line-height:16px;font-weight:400;color:#1e1e1e;transform:scaleX(1.1000);transform-origin:0 50%;">0</span>
<span class="t" style="left:1580.6px;top:727.0px;font-size:12px;line-height:16px;font-weight:400;color:#2b84bf;transform:scaleX(1.1200);transform-origin:0 50%;">Средний чек</span>
<span class="t" style="left:1617.0px;top:768.6px;font-size:12px;line-height:16px;font-weight:400;color:#1e1e1e;transform:scaleX(1.1000);transform-origin:0 50%;">0</span>
<span class="t" style="left:1617.0px;top:810.6px;font-size:12px;line-height:16px;font-weight:400;color:#1e1e1e;transform:scaleX(1.1000);transform-origin:0 50%;">0</span>
<span class="t" style="left:1686.9px;top:727.0px;font-size:12px;line-height:16px;font-weight:400;color:#2b84bf;transform:scaleX(1.1200);transform-origin:0 50%;">Продажи</span>
<span class="t" style="left:1712.0px;top:768.6px;font-size:12px;line-height:16px;font-weight:400;color:#1e1e1e;transform:scaleX(1.1000);transform-origin:0 50%;">0</span>
<span class="t" style="left:1712.0px;top:810.6px;font-size:12px;line-height:16px;font-weight:400;color:#1e1e1e;transform:scaleX(1.1000);transform-origin:0 50%;">0</span>
<div class="abs" style="left:1763px;top:714px;width:69.5px;height:42px;overflow:hidden"><div class="abs" style="left:-1763px;top:-714px"><span class="t" style="left:1777.5px;top:721.0px;font-size:12px;line-height:16px;font-weight:400;color:#2b84bf;transform:scaleX(1.0836);transform-origin:0 50%;">Стоимость</span></div></div>
<div class="abs" style="left:1763px;top:714px;width:69.5px;height:42px;overflow:hidden"><div class="abs" style="left:-1763px;top:-714px"><span class="t" style="left:1783.1px;top:733.0px;font-size:12px;line-height:16px;font-weight:400;color:#2b84bf;transform:scaleX(1.1200);transform-origin:0 50%;">продажи</span></div></div>
<span class="t" style="left:1807.0px;top:768.6px;font-size:12px;line-height:16px;font-weight:400;color:#1e1e1e;transform:scaleX(1.1000);transform-origin:0 50%;">0</span>
<span class="t" style="left:1807.0px;top:810.6px;font-size:12px;line-height:16px;font-weight:400;color:#1e1e1e;transform:scaleX(1.1000);transform-origin:0 50%;">0</span>
<span class="t" style="left:258.8px;top:728.3px;font-size:11px;line-height:14px;font-weight:700;color:#676a6c;transform:scaleX(1.1828);transform-origin:0 50%;">Канал трафика</span>
<span class="t" style="left:242.7px;top:768.8px;font-size:12px;line-height:16px;font-weight:400;color:#2a2a2a;transform:scaleX(1.1311);transform-origin:0 50%;">Итого / Среднее</span>
<span class="t" style="left:260.9px;top:811.2px;font-size:12px;line-height:16px;font-weight:400;color:#2a2a2a;transform:scaleX(1.1078);transform-origin:0 50%;">Без сессии</span>
<svg width="300" height="40" viewBox="232 798 300 40" style="left:232px;top:798px">
<path d="M243.300 812.900v11M237.800 818.400h11" stroke="#2bb095" stroke-width="3" fill="none"/>
<circle cx="467.500" cy="818.400" r="7.200" fill="#fff" stroke="#b9b9b9" stroke-width="1.200"/>
<rect x="466.700" y="816.800" width="1.700" height="6" fill="#5f8bc6"/><rect x="466.700" y="813.600" width="1.700" height="1.700" fill="#5f8bc6"/>
<rect x="481.400" y="813.400" width="14.200" height="14.200" fill="#fff" stroke="#b0b0b0" stroke-width="1"/>
<path d="M484.600 820.300l3.300 3.100 5.700-6.300" fill="none" stroke="#1fae90" stroke-width="2.400"/>
<g fill="none" stroke="#36b398" stroke-width="1"><path d="M505 819.700l2.900-3M510 816.700l2.800 3M515 819.700l3-3"/><circle cx="503.900" cy="820.800" r="1.600"/><circle cx="508.900" cy="815.600" r="1.600"/><circle cx="513.900" cy="820.800" r="1.600"/><circle cx="519.100" cy="815.700" r="1.600"/></g>
</svg>
<svg width="1847" height="883" viewBox="0 0 1847 883" style="left:0;top:0;pointer-events:none">
<!-- watermark -->
<g fill="none" stroke="#000" stroke-opacity=".10" stroke-width="1.100" stroke-linejoin="round">
<path d="M1439.500 752.500h55a8 8 0 0 1 8 8v42.500a8 8 0 0 1-8 8h-14.500v15.500a3 3 0 0 1-5.200 2l-18.300-17.500h-17a8 8 0 0 1-8-8v-42.500a8 8 0 0 1 8-8z"/>
<path d="M1440 756.500h54a4.500 4.500 0 0 1 4.500 4.500v41.500a4.500 4.500 0 0 1-4.500 4.500h-18.500v18.500l-19.500-18.500h-16a4.500 4.500 0 0 1-4.500-4.500v-41.500a4.500 4.500 0 0 1 4.500-4.500z"/>
<path d="M1445 775.300h44a3.700 3.700 0 0 1 3.700 3.700v3a8.500 8.500 0 0 1-8.500 8.500h-4.500a8.500 8.500 0 0 1-8.500-8.500v-2.700h-10.300v2.700a8.500 8.500 0 0 1-8.500 8.500h-2.700a8.500 8.500 0 0 1-8.500-8.500v-3a3.700 3.700 0 0 1 3.700-3.700z"/>
<path d="M1445 779.500h13v3a6.500 6.500 0 0 1-13 0zM1475 779.500h13.500v3a6.700 6.700 0 0 1-13.500 0z"/>
</g>
<text x="1520" y="794.600" font-family="Liberation Sans, sans-serif" font-size="35.500" font-weight="700" textLength="273" lengthAdjust="spacingAndGlyphs" fill="none" stroke="#000" stroke-opacity=".10" stroke-width="1.100">ПАРТНЕРКИН</text>
<!-- chat -->
<circle cx="1799.500" cy="841.300" r="27.500" fill="#000"/>
<g fill="#000" stroke="#fff" stroke-width="1.100" stroke-linejoin="round">
<rect x="1790.800" y="828" width="24" height="15.600" rx="2.500"/>
<path d="M1787.800 834.700h19.500a2.500 2.500 0 0 1 2.500 2.500v11a2.500 2.500 0 0 1-2.500 2.500h-10.800l-5 5.300v-5.300h-3.700a2.500 2.500 0 0 1-2.500-2.500v-11a2.500 2.500 0 0 1 2.500-2.500z"/>
</g>
<path d="M1790.500 840h8M1790.500 843h14.500M1790.500 846h14.500" stroke="#9a9a9a" stroke-width="1.500"/>
<!-- red annotation -->
<rect x="229.500" y="254.500" width="1609" height="622.500" rx="6.500" fill="none" stroke="#e0403a" stroke-width="5"/>
<rect x="228" y="880" width="1" height="3" fill="#222"/>
</svg>
</body>
</html>
